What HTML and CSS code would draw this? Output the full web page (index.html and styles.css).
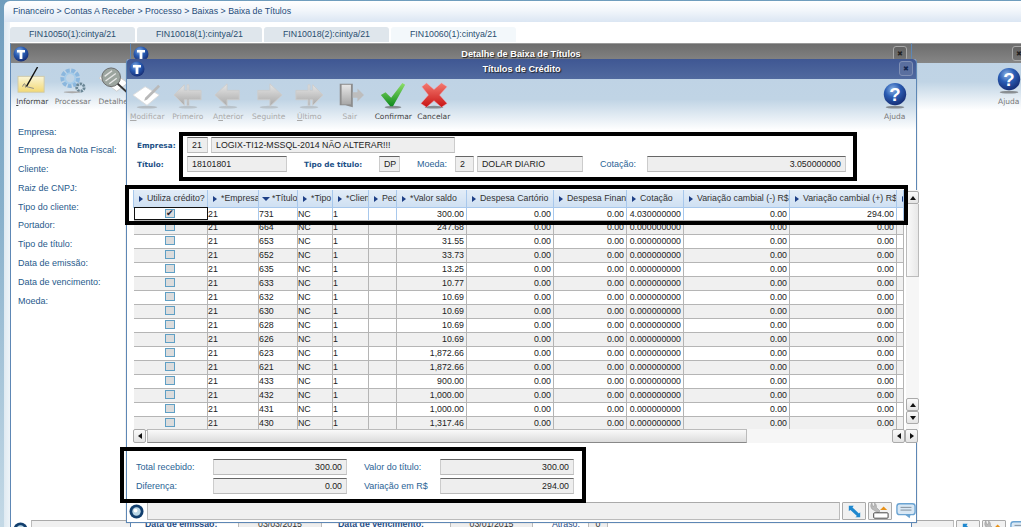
FILE: index.html
```html
<!DOCTYPE html>
<html lang="pt">
<head>
<meta charset="utf-8">
<title>Baixa de Títulos</title>
<link rel="stylesheet" href="styles.css">
</head>
<body>
<svg class="defs" aria-hidden="true">
  <defs>
    <radialGradient id="gBlue" cx="40%" cy="30%" r="75%"><stop offset="0" stop-color="#8fb6e6"/><stop offset=".45" stop-color="#2a5db4"/><stop offset="1" stop-color="#14296f"/></radialGradient>
    <linearGradient id="gGrey" x1="0" y1="0" x2="0" y2="1"><stop offset="0" stop-color="#e6e6e6"/><stop offset="1" stop-color="#a8a8a8"/></linearGradient>
    <linearGradient id="gGreen" x1="0" y1="0" x2="0" y2="1"><stop offset="0" stop-color="#8fe06a"/><stop offset="1" stop-color="#0f8a1e"/></linearGradient>
    <linearGradient id="gRed" x1="0" y1="0" x2="0" y2="1"><stop offset="0" stop-color="#f47a70"/><stop offset="1" stop-color="#c81414"/></linearGradient>
    <linearGradient id="gNote" x1="0" y1="0" x2="0" y2="1"><stop offset="0" stop-color="#fbf6d8"/><stop offset="1" stop-color="#f2d873"/></linearGradient>
    <symbol id="logo" viewBox="0 0 16 16"><circle cx="8" cy="8" r="7.5" fill="url(#gBlue)"/><path d="M4 4h8v2.4H9.4V13H6.6V6.400H4z" fill="#fff"/></symbol>
    <symbol id="ring" viewBox="0 0 16 16"><circle cx="8" cy="8" r="7.500" fill="#123f6e"/><circle cx="8" cy="8" r="4.500" fill="#b9d6e6"/><circle cx="7" cy="7" r="2" fill="#fff"/></symbol>
    <symbol id="modify" viewBox="0 0 32 30"><ellipse cx="16" cy="27" rx="11" ry="1.500" fill="#999" opacity=".5"/><path d="M1 14 14 5l15 9-13 11z" fill="#fff" stroke="#ddd"/><path d="M14 17 28 3l2 2-14 14-3 1z" fill="#b9b9b9"/></symbol>
    <symbol id="first" viewBox="0 0 32 30"><ellipse cx="16" cy="27" rx="10" ry="1.500" fill="#999" opacity=".4"/><path d="M1 14 12 3v6h3V3l2 0v6h13v10H17v6h-2v-6h-3v6z" fill="url(#gGrey)" stroke="#ccc"/></symbol>
    <symbol id="prev" viewBox="0 0 32 30"><ellipse cx="16" cy="27" rx="10" ry="1.500" fill="#999" opacity=".4"/><path d="M2 14 15 2v7h13v10H15v7z" fill="url(#gGrey)" stroke="#ccc"/></symbol>
    <symbol id="next" viewBox="0 0 32 30"><ellipse cx="16" cy="27" rx="10" ry="1.500" fill="#999" opacity=".4"/><path d="M30 14 17 2v7H4v10h13v7z" fill="url(#gGrey)" stroke="#ccc"/></symbol>
    <symbol id="last" viewBox="0 0 32 30"><ellipse cx="16" cy="27" rx="10" ry="1.500" fill="#999" opacity=".4"/><path d="M31 14 20 3v6h-3V3h-2v6H2v10h13v6h2v-6h3v6z" fill="url(#gGrey)" stroke="#ccc"/></symbol>
    <symbol id="door" viewBox="0 0 32 30"><path d="M5 2h14v25l-8-2H5z" fill="#8d8d8d"/><path d="M7 3h10v21H7z" fill="url(#gGrey)"/><path d="M19 11h5V7l7 7-7 7v-4h-5z" fill="#bdbdbd"/></symbol>
    <symbol id="check" viewBox="0 0 32 30"><ellipse cx="16" cy="27" rx="9" ry="1.500" fill="#555" opacity=".6"/><path d="M3 14l5-3 6 6L26 1l3 2-13 23h-3z" fill="url(#gGreen)"/></symbol>
    <symbol id="cross" viewBox="0 0 32 30"><ellipse cx="16" cy="27" rx="10" ry="1.500" fill="#555" opacity=".6"/><path d="M3 5l5-4 8 7 8-7 6 4-8 9 8 9-6 4-8-7-8 7-6-4 8-9z" fill="url(#gRed)" stroke="#eab" stroke-width=".5"/></symbol>
    <symbol id="help" viewBox="0 0 32 30"><ellipse cx="16" cy="27" rx="10" ry="1.500" fill="#555" opacity=".6"/><circle cx="16" cy="13" r="12" fill="url(#gBlue)"/><text x="16" y="20" text-anchor="middle" font-family="Liberation Sans, sans-serif" font-weight="700" font-size="20" fill="#fff">?</text></symbol>
    <symbol id="note" viewBox="0 0 32 30"><rect x="1" y="10" width="28" height="17" fill="url(#gNote)" stroke="#cfc9a8"/><path d="M6 21c2-6 3-2 3 1" fill="none" stroke="#777"/><path d="M10 21 22 0" stroke="#111" stroke-width="1.500"/><path d="M10 21l8 2" stroke="#888"/></symbol>
    <symbol id="gears" viewBox="0 0 32 30"><circle cx="13" cy="12" r="8" fill="none" stroke="#8bb7de" stroke-width="5" stroke-dasharray="4 1.500"/><circle cx="13" cy="12" r="5.500" fill="none" stroke="#a7cdea" stroke-width="2"/><circle cx="24" cy="22" r="4" fill="none" stroke="#6b8796" stroke-width="3" stroke-dasharray="2.500 1"/><ellipse cx="15" cy="27" rx="9" ry="1" fill="#aaa"/></symbol>
    <symbol id="lens" viewBox="0 0 32 30"><path d="M1 12 11 3l21 14-12 9z" fill="#fff" stroke="#ccc"/><circle cx="14" cy="11" r="10" fill="#9ca59f" stroke="#666"/><path d="M7 10l8-6M8 15l11-8M12 18l8-6" stroke="#e6e6e6" stroke-width="1.500"/><path d="M21 18l10 9" stroke="#333" stroke-width="2"/></symbol>
    <symbol id="resize" viewBox="0 0 16 16"><path d="M1 1h6L5.500 3l8 7.500L15 9v6H9l2-1.500L3 6 1 7.500z" fill="#1f88cf"/></symbol>
    <symbol id="wrench" viewBox="0 0 24 20"><path d="M3 1a5 5 0 0 0 2 8l5 3 2-2-4-4a5 5 0 0 0-2-5l0 3-2 1z" fill="#bbb" stroke="#888" stroke-width=".5"/><path d="M12 9l4-4 4 4z" fill="#e8921a"/><rect x="5" y="12" width="16" height="6" rx="1" fill="#fff" stroke="#333"/></symbol>
    <symbol id="bubble" viewBox="0 0 22 18"><rect x="1" y="1" width="20" height="12" rx="3" fill="#d9e8f5" stroke="#6aa3d2" stroke-width="1.500"/><path d="M10 13h6l-1 4z" fill="#6aa3d2"/><path d="M5 5h12M5 8h12" stroke="#7a8794"/></symbol>
  </defs>
</svg>

<div class="desk">
  <div class="crumb">Financeiro &gt; Contas A Receber &gt; Processo &gt; Baixas &gt; Baixa de Títulos</div>
  <div class="main">
    <div class="tabs">
      <div class="tab">FIN10050(1):cintya/21</div>
      <div class="tab">FIN10018(1):cintya/21</div>
      <div class="tab">FIN10018(2):cintya/21</div>
      <div class="tab tab-on">FIN10060(1):cintya/21</div>
    </div>
  </div>

  <section class="win win-back">
    <header class="bar bar-grey"><svg class="tlogo"><use href="#logo"/></svg><span class="x">✖</span></header>
    <div class="tools tools-back">
      <div class="tool"><svg class="ic"><use href="#note"/></svg><span class="on"><u>I</u>nformar</span></div>
      <div class="tool"><svg class="ic"><use href="#gears"/></svg><span>Processar</span></div>
      <div class="tool"><svg class="ic"><use href="#lens"/></svg><span>Detalhe</span></div>
      <div class="tool tool-help"><svg class="ic"><use href="#help"/></svg><span>Ajuda</span></div>
    </div>
    <ul class="labels">
      <li>Empresa:</li><li>Empresa da Nota Fiscal:</li><li>Cliente:</li><li>Raiz de CNPJ:</li><li>Tipo do cliente:</li>
      <li>Portador:</li><li>Tipo de título:</li><li>Data de emissão:</li><li>Data de vencimento:</li><li>Moeda:</li>
    </ul>
    <footer class="stat stat-back">
      <svg class="ring"><use href="#ring"/></svg>
      <div class="stat-field"></div>
      <div class="sbtn"><svg class="s16"><use href="#resize"/></svg></div>
      <div class="sbtn"><svg class="s22"><use href="#wrench"/></svg></div>
      <svg class="s22 bub"><use href="#bubble"/></svg>
    </footer>
  </section>

  <section class="win win-mid">
    <header class="bar bar-grey"><svg class="tlogo"><use href="#logo"/></svg><h2>Detalhe de Baixa de Títulos</h2><span class="x">✖</span></header>
    <div class="mid-row">
      <b>Data de emissão:</b><span class="f-a">03/03/2015</span>
      <b class="mid-b">Data de vencimento:</b><span class="f-b">03/01/2015</span>
      <em>Atraso:</em><span class="f-c">0</span>
    </div>
  </section>

  <section class="win win-top">
    <header class="bar bar-blue"><svg class="tlogo"><use href="#logo"/></svg><h2>Títulos de Crédito</h2><span class="x">✖</span></header>
    <div class="tools">
      <div class="tool off"><svg class="ic"><use href="#modify"/></svg><span><u>M</u>odificar</span></div>
      <div class="tool off"><svg class="ic"><use href="#first"/></svg><span>Primeiro</span></div>
      <div class="tool off"><svg class="ic"><use href="#prev"/></svg><span>A<u>n</u>terior</span></div>
      <div class="tool off"><svg class="ic"><use href="#next"/></svg><span>Seguinte</span></div>
      <div class="tool off"><svg class="ic"><use href="#last"/></svg><span><u>Ú</u>ltimo</span></div>
      <div class="tool off"><svg class="ic"><use href="#door"/></svg><span>Sair</span></div>
      <div class="tool tool-ok"><svg class="ic"><use href="#check"/></svg><span class="on">Confirmar</span></div>
      <div class="tool"><svg class="ic"><use href="#cross"/></svg><span class="on">Cancelar</span></div>
      <div class="tool tool-right"><svg class="ic"><use href="#help"/></svg><span>Ajuda</span></div>
    </div>

    <div class="form">
      <div class="row">
        <label class="lb lb-a">Empresa:</label>
        <div class="fld w21">21</div>
        <div class="fld w244 ml3">LOGIX-TI12-MSSQL-2014 NÃO ALTERAR!!!</div>
      </div>
      <div class="row">
        <label class="lb lb-a">Título:</label>
        <div class="fld w100">18101801</div>
        <label class="lb lb-b">Tipo de título:</label>
        <div class="fld w21">DP</div>
        <label class="lt lt-a">Moeda:</label>
        <div class="fld w19">2</div>
        <div class="fld w106 ml3">DOLAR DIARIO</div>
        <label class="lt lt-b">Cotação:</label>
        <div class="fld w199 num">3.050000000</div>
      </div>
    </div>

    <div class="grid">
      <div class="grid-top">
        <table class="tbl">
          <colgroup>
            <col class="c1"><col class="c2"><col class="c3"><col class="c4"><col class="c5"><col class="c6"><col class="c7"><col class="c8"><col class="c9"><col class="c10"><col class="c11"><col class="c12"><col class="c13">
          </colgroup>
          <thead>
            <tr>
              <th><i class="ar"></i>Utiliza crédito?</th><th><i class="ar"></i>*Empresa</th><th><i class="ar ar-d"></i>*Título</th><th><i class="ar"></i>*Tipo</th><th><i class="ar"></i>*Cliente</th><th><i class="ar"></i>Pedido</th><th><i class="ar"></i>*Valor saldo</th><th><i class="ar"></i>Despesa Cartório</th><th><i class="ar"></i>Despesa Financeira</th><th><i class="ar"></i>Cotação</th><th><i class="ar"></i>Variação cambial (-) R$</th><th><i class="ar"></i>Variação cambial (+) R$</th><th><i class="ar"></i></th>
            </tr>
          </thead>
          <tbody>
            <tr class="first"><td class="chk"><i class="box">✔</i></td><td>21</td><td>731</td><td>NC</td><td>1</td><td></td><td class="r">300.00</td><td class="r">0.00</td><td class="r">0.00</td><td class="r">4.030000000</td><td class="r">0.00</td><td class="r">294.00</td><td></td></tr>
            <tr class="alt"><td class="chk"><i class="box"></i></td><td>21</td><td>664</td><td>NC</td><td>1</td><td></td><td class="r">247.68</td><td class="r">0.00</td><td class="r">0.00</td><td class="r">0.000000000</td><td class="r">0.00</td><td class="r">0.00</td><td></td></tr>
            <tr><td class="chk"><i class="box"></i></td><td>21</td><td>653</td><td>NC</td><td>1</td><td></td><td class="r">31.55</td><td class="r">0.00</td><td class="r">0.00</td><td class="r">0.000000000</td><td class="r">0.00</td><td class="r">0.00</td><td></td></tr>
            <tr class="alt"><td class="chk"><i class="box"></i></td><td>21</td><td>652</td><td>NC</td><td>1</td><td></td><td class="r">33.73</td><td class="r">0.00</td><td class="r">0.00</td><td class="r">0.000000000</td><td class="r">0.00</td><td class="r">0.00</td><td></td></tr>
            <tr><td class="chk"><i class="box"></i></td><td>21</td><td>635</td><td>NC</td><td>1</td><td></td><td class="r">13.25</td><td class="r">0.00</td><td class="r">0.00</td><td class="r">0.000000000</td><td class="r">0.00</td><td class="r">0.00</td><td></td></tr>
            <tr class="alt"><td class="chk"><i class="box"></i></td><td>21</td><td>633</td><td>NC</td><td>1</td><td></td><td class="r">10.77</td><td class="r">0.00</td><td class="r">0.00</td><td class="r">0.000000000</td><td class="r">0.00</td><td class="r">0.00</td><td></td></tr>
            <tr><td class="chk"><i class="box"></i></td><td>21</td><td>632</td><td>NC</td><td>1</td><td></td><td class="r">10.69</td><td class="r">0.00</td><td class="r">0.00</td><td class="r">0.000000000</td><td class="r">0.00</td><td class="r">0.00</td><td></td></tr>
            <tr class="alt"><td class="chk"><i class="box"></i></td><td>21</td><td>630</td><td>NC</td><td>1</td><td></td><td class="r">10.69</td><td class="r">0.00</td><td class="r">0.00</td><td class="r">0.000000000</td><td class="r">0.00</td><td class="r">0.00</td><td></td></tr>
            <tr><td class="chk"><i class="box"></i></td><td>21</td><td>628</td><td>NC</td><td>1</td><td></td><td class="r">10.69</td><td class="r">0.00</td><td class="r">0.00</td><td class="r">0.000000000</td><td class="r">0.00</td><td class="r">0.00</td><td></td></tr>
            <tr class="alt"><td class="chk"><i class="box"></i></td><td>21</td><td>626</td><td>NC</td><td>1</td><td></td><td class="r">10.69</td><td class="r">0.00</td><td class="r">0.00</td><td class="r">0.000000000</td><td class="r">0.00</td><td class="r">0.00</td><td></td></tr>
            <tr><td class="chk"><i class="box"></i></td><td>21</td><td>623</td><td>NC</td><td>1</td><td></td><td class="r">1,872.66</td><td class="r">0.00</td><td class="r">0.00</td><td class="r">0.000000000</td><td class="r">0.00</td><td class="r">0.00</td><td></td></tr>
            <tr class="alt"><td class="chk"><i class="box"></i></td><td>21</td><td>621</td><td>NC</td><td>1</td><td></td><td class="r">1,872.66</td><td class="r">0.00</td><td class="r">0.00</td><td class="r">0.000000000</td><td class="r">0.00</td><td class="r">0.00</td><td></td></tr>
            <tr><td class="chk"><i class="box"></i></td><td>21</td><td>433</td><td>NC</td><td>1</td><td></td><td class="r">900.00</td><td class="r">0.00</td><td class="r">0.00</td><td class="r">0.000000000</td><td class="r">0.00</td><td class="r">0.00</td><td></td></tr>
            <tr class="alt"><td class="chk"><i class="box"></i></td><td>21</td><td>432</td><td>NC</td><td>1</td><td></td><td class="r">1,000.00</td><td class="r">0.00</td><td class="r">0.00</td><td class="r">0.000000000</td><td class="r">0.00</td><td class="r">0.00</td><td></td></tr>
            <tr><td class="chk"><i class="box"></i></td><td>21</td><td>431</td><td>NC</td><td>1</td><td></td><td class="r">1,000.00</td><td class="r">0.00</td><td class="r">0.00</td><td class="r">0.000000000</td><td class="r">0.00</td><td class="r">0.00</td><td></td></tr>
            <tr class="alt"><td class="chk"><i class="box"></i></td><td>21</td><td>430</td><td>NC</td><td>1</td><td></td><td class="r">1,317.46</td><td class="r">0.00</td><td class="r">0.00</td><td class="r">0.000000000</td><td class="r">0.00</td><td class="r">0.00</td><td></td></tr>
          </tbody>
        </table>
        <div class="vs">
          <div class="sb sb-up"><i class="t-up"></i></div>
          <div class="vs-thumb"><i class="grip"></i></div>
          <div class="vs-track"></div>
          <div class="sb"><i class="t-up"></i></div>
          <div class="sb"><i class="t-dn"></i></div>
        </div>
      </div>
      <div class="hs">
        <div class="sb sb-h"><i class="t-lf"></i></div>
        <div class="hs-thumb"><i class="grip"></i></div>
        <div class="hs-track"></div>
        <div class="sb sb-h"><i class="t-lf"></i></div>
        <div class="sb sb-h"><i class="t-rt"></i></div>
      </div>
    </div>

    <div class="summary">
      <label class="lt">Total recebido:</label><div class="fld num">300.00</div><span></span><label class="lt">Valor do título:</label><div class="fld num">300.00</div>
      <label class="lt">Diferença:</label><div class="fld num">0.00</div><span></span><label class="lt">Variação em R$</label><div class="fld num">294.00</div>
    </div>

    <footer class="stat">
      <svg class="ring"><use href="#ring"/></svg>
      <div class="stat-field"></div>
      <div class="sbtn"><svg class="s16"><use href="#resize"/></svg></div>
      <div class="sbtn"><svg class="s22"><use href="#wrench"/></svg></div>
      <svg class="s22 bub"><use href="#bubble"/></svg>
    </footer>
  </section>

  <div class="mark mark-a"></div>
  <div class="mark mark-b"></div>
  <div class="mark mark-c"></div>
</div>
</body>
</html>
```
FILE: styles.css
```css
* { box-sizing: border-box; }
html, body { margin: 0; padding: 0; width: 1021px; height: 527px; overflow: hidden; }
body { font-family: "Liberation Sans", Arial, sans-serif; font-size: 8.800px; color: #333; }
.defs { position: absolute; width: 0; height: 0; }
.desk { position: relative; width: 1021px; height: 527px; overflow: hidden; background: linear-gradient(180deg, #6f9dbd 0, #88b0cb 40%, #c4d9e6 100%); padding: 1px 0 0 4px; }

.crumb { height: 21px; border-radius: 6px 0 0 0; background: linear-gradient(180deg, #fff 0, #f2f6fb 45%, #dbe6f3 100%); padding-left: 9px; line-height: 21px; font-size: 8.800px; color: #1f4d7a; }
.main { height: 505px; background: linear-gradient(90deg, #dfeaf2 0, #eef4f8 6px, #fff 6px); padding: 5px 0 0 6px; }
.tabs { display: flex; gap: 2px; height: 15px; }
.tab { width: 125px; height: 15px; background: #dfe6ec; border-radius: 3px 3px 0 0; text-align: center; line-height: 15px; font-size: 8.800px; color: #2a4f70; }
.tab-on { background: #f3f8fb; }

.win { position: absolute; display: flex; flex-direction: column; background: #fff; border: 1px solid #5d87b5; border-top: 0; }
.win-back { left: 10px; top: 43px; width: 1030px; height: 490px; border-top: 1px solid #999; }
.win-mid { left: 130px; top: 43px; width: 782px; height: 490px; border-top: 1px solid #999; }
.win-top { left: 126px; top: 59px; width: 791px; height: 464px; border-radius: 3px 3px 0 0; box-shadow: 0 0 1px #888; }

.bar { position: relative; display: flex; align-items: center; justify-content: center; flex: none; }
.bar-grey { height: 19px; background: linear-gradient(180deg, #6d6d6d, #868686); }
.bar-blue { height: 20px; background: linear-gradient(180deg, #3f5793, #516a9f); border-radius: 3px 3px 0 0; }
.bar h2 { margin: 0; font-size: 9.200px; font-weight: 700; color: #fff; text-shadow: 1px 1px 1px #222; }
.tlogo { position: absolute; left: 2px; top: 2px; width: 16px; height: 16px; }
.x { position: absolute; top: 2px; right: 3px; width: 14px; height: 15px; border: 1px solid #aaa; border-radius: 3px; background: rgba(0,0,0,.12); color: #222; font-size: 7px; line-height: 13px; text-align: center; }
.win-back .x { right: 13px; }
.win-mid .x { right: 4px; }
.win-top .x { background: #5a6f9f; border-color: #8090b5; right: 3px; top: 2px; color: #12264f; }

.tools { display: flex; flex: none; height: 51px; padding-top: 3px; background: linear-gradient(180deg, #bfd3e5 0, #c0d4e5 40%, #fff 100%); }
.tool { width: 40.500px; display: flex; flex-direction: column; align-items: center; font-family: "DejaVu Sans", sans-serif; font-size: 7.500px; color: #777; flex: none; }
.tool span { display: block; height: 12px; line-height: 12px; margin-top: 1px; white-space: nowrap; }
.tool .on { color: #444; }
.tool.off span { color: #aaa; }
.ic { width: 32px; height: 28px; flex: none; }
.tool-ok { margin-left: 3px; }
.tool-right { margin-left: auto; margin-right: 1px; }
.tools-back { height: 47px; padding-top: 4px; padding-left: 1px; }
.tools-back .tool { width: 40.500px; }
.tool-help { margin-left: auto; margin-right: 10px; }

.labels { list-style: none; margin: 0; padding: 12.500px 0 0 7px; font-size: 9px; color: #1f5a8c; }
.labels li { height: 18.800px; line-height: 18.800px; }

.stat { display: flex; align-items: flex-start; gap: 2px; height: 20px; margin-top: 8px; padding-left: 2px; background: #fff; flex: none; }
.ring { width: 15px; height: 15px; margin-top: 2px; flex: none; }
.stat-field { width: 693px; height: 18px; background: #f0f0f0; border: 1px solid #bbb; border-top-color: #aaa; margin-left: 1px; flex: none; }
.sbtn { width: 24px; height: 18px; border: 1px solid #aaa; border-radius: 1px; background: #f1f1f1; display: flex; align-items: center; justify-content: center; flex: none; }
.s16 { width: 13px; height: 13px; }
.s22 { width: 22px; height: 18px; }
.bub { margin-left: 2px; }
.stat-back { height: 14px; margin-top: 0; position: absolute; top: 476px; left: 0; width: 1019px; }
.stat-back .stat-field { width: 923px; }

.mid-row { position: absolute; top: 474px; left: 14px; display: flex; align-items: center; height: 12px; font-size: 8.800px; color: #1f4d85; white-space: nowrap; }
.mid-row b { font-weight: 700; width: 93px; }
.mid-row .mid-b { width: 112px; }
.f-a, .f-b, .f-c { height: 14px; line-height: 12px; background: #eee; border: 1px solid #bbb; color: #333; text-align: center; }
.f-a { width: 84px; margin-right: 16px; }
.f-b { width: 83px; margin-right: 19px; }
.mid-row em { font-style: normal; width: 36px; }
.f-c { width: 20px; }

.form { padding: 7px 0 0 10px; flex: none; }
.row { display: flex; align-items: center; height: 16px; margin-bottom: 3px; }
.row:last-child { margin-bottom: 0; }
.lb { font-family: "DejaVu Sans", sans-serif; font-weight: 700; font-size: 7.300px; color: #1b4f86; white-space: nowrap; flex: none; }
.lb-a { width: 50px; }
.lb-b { width: 75px; margin-left: 17px; }
.lt { font-size: 9px; color: #2a6395; white-space: nowrap; flex: none; }
.lt-a { width: 38px; margin-left: 17px; }
.lt-b { width: 47px; margin-left: 17px; }
.fld { height: 16px; line-height: 14px; padding: 0 4px; background: #eee; border: 1px solid #ccc; border-top: 1px solid #666; border-bottom: 1px solid #bbb; font-size: 8.800px; color: #222; white-space: nowrap; overflow: hidden; flex: none; }
.num { text-align: right; }
.w19 { width: 19px; } .w21 { width: 21px; } .w100 { width: 100px; } .w106 { width: 106px; } .w199 { width: 199px; } .w244 { width: 244px; }
.ml3 { margin-left: 3px; }

.grid { margin: 18px 0 0 6px; width: 784px; flex: none; }
.grid-top { display: flex; height: 239px; }
.tbl { table-layout: fixed; border-collapse: collapse; width: 770px; height: 17px; flex: none; margin-right: 1px; align-self: flex-start; }
.c1 { width: 74px; } .c2 { width: 51px; } .c3 { width: 39px; } .c4 { width: 35px; } .c5 { width: 36px; } .c6 { width: 28px; } .c7 { width: 70px; } .c8 { width: 87px; } .c9 { width: 73px; } .c10 { width: 57px; } .c11 { width: 106px; } .c12 { width: 107px; } .c13 { width: 7px; }
.tbl th { height: 17px; padding: 0 0 0 13px; position: relative; font-weight: 400; font-size: 8.800px; color: #333; text-align: left; white-space: nowrap; overflow: hidden; background: linear-gradient(180deg, #e2ecf7, #cfe0f2); border-right: 1px solid #a8c8ec; border-bottom: 1px solid #a8c8ec; border-left: 1px solid #a8c8ec; }
.ar { position: absolute; left: 5px; top: 6px; width: 0; height: 0; border-left: 4px solid #1d3f86; border-top: 3px solid transparent; border-bottom: 3px solid transparent; }
.ar-d { left: 3px; top: 7px; border-left: 4px solid transparent; border-right: 4px solid transparent; border-top: 4px solid #1d3f86; border-bottom: 0; }
.tbl td { height: 14px; padding: 0 2px 0 0; font-size: 8.800px; line-height: 12px; color: #222; border-right: 1px solid #b5b5b5; border-bottom: 1px solid #b5b5b5; white-space: nowrap; overflow: hidden; background: #fff; }
.tbl .first td { height: 13px; border-right-color: #a8c8ec; }
.tbl .alt td { background: #f0f0f0; }
.tbl .r { text-align: right; }
.tbl .chk { text-align: center; padding: 0; vertical-align: top; }
.tbl .first .chk { outline: 1px solid #111; outline-offset: -1px; }
.box { display: block; width: 10px; height: 9px; margin: 1px auto 0; background: #dcdcdc; border: 1px solid #5f9fc4; font-style: normal; font-size: 9px; line-height: 7px; color: #223; }

.vs { display: flex; flex-direction: column; width: 13px; margin-left: 1px; flex: none; background: #f6f6f6; }
.sb { width: 13px; height: 13px; flex: none; background: linear-gradient(180deg, #fafafa, #e4e4e4); border: 1px solid #aaa; border-radius: 2px; display: flex; align-items: center; justify-content: center; }
.sb-up { margin-top: 1px; }
.vs-thumb { height: 73px; flex: none; background: linear-gradient(90deg, #fafafa, #e8e8e8); border: 1px solid #bbb; border-top: 0; display: flex; align-items: center; justify-content: center; }
.vs-track { height: 121px; flex: none; background-color: #f6f6f6; background-image: radial-gradient(#ddd 0.5px, transparent 0.6px); background-size: 2px 2px; }
.t-up, .t-dn, .t-lf, .t-rt { display: block; width: 0; height: 0; }
.t-up { border: 3px solid transparent; border-top: 0; border-bottom: 4px solid #111; }
.t-dn { border: 3px solid transparent; border-bottom: 0; border-top: 4px solid #111; }
.t-lf { border: 3px solid transparent; border-left: 0; border-right: 4px solid #111; }
.t-rt { border: 3px solid transparent; border-right: 0; border-left: 4px solid #111; }
.grip { display: block; width: 14px; height: 12px; background-image: radial-gradient(#aaa 0.5px, transparent 0.6px); background-size: 2px 2px; }
.hs { display: flex; height: 14px; }
.hs .sb-h { height: 14px; }
.hs .sb-h:first-child { margin-right: 1px; }
.hs-thumb { width: 600px; height: 14px; flex: none; background: linear-gradient(180deg, #fafafa, #dcdcdc); border: 1px solid #bbb; border-bottom-color: #888; display: flex; align-items: center; justify-content: center; }
.hs-track { width: 145px; flex: none; background-color: #f6f6f6; background-image: radial-gradient(#ddd 0.5px, transparent 0.6px); background-size: 2px 2px; }

.summary { display: grid; grid-template-columns: 77px 134px 17px 76px 134px; grid-auto-rows: 16px; row-gap: 3px; align-items: center; margin: 16px 0 0 9px; flex: none; }

.mark { position: absolute; border: 4px solid #000; pointer-events: none; }
.mark-a { left: 179px; top: 132px; width: 678px; height: 49px; }
.mark-b { left: 125px; top: 185px; width: 783px; height: 40px; }
.mark-c { left: 120px; top: 447px; width: 466px; height: 56px; }
```
